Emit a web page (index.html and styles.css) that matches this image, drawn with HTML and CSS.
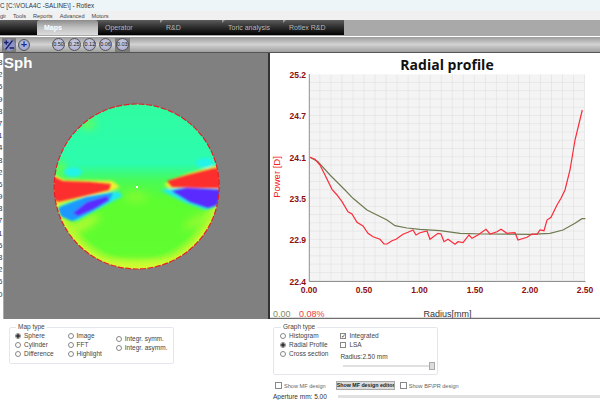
FILE: index.html
```html
<!DOCTYPE html>
<html lang="en">
<head>
<meta charset="utf-8">
<title>Rotlex</title>
<link rel="stylesheet" href="styles.css">
</head>
<body>
<div class="app">
  <div class="titlebar">C [C:\VOLA4C -SALINE\] - Rotlex</div>
  <div class="menubar"><span class="login">gin</span><span>Tools</span><span>Reports</span><span>Advanced</span><span>Motors</span></div>
  <div class="tabbar">
    <div class="tabs">
      <span class="tab tab-active">Maps</span>
      <span class="tab tab-op">Operator</span>
      <span class="tab tab-rd">R&amp;D</span>
      <span class="tab tab-toric">Toric analysis</span>
      <span class="tab tab-rotlex">Rotlex R&amp;D</span>
    </div>
  </div>
  <div class="toolbar">
    <span class="tool-box"><span class="rbtn">
      <svg class="sign-icon" viewBox="0 0 12 12" width="12" height="12" aria-hidden="true"><path d="M1 3.500H5.500M3.250 1.200V5.800M9.500 1.500L2.500 10.500M6.500 9H11" fill="none" stroke="#16206e" stroke-width="1.300"/></svg>
    </span></span>
    <span class="rbtn rbtn-plus">+</span>
    <span class="steps">
      <span class="rbtn rbtn-step">0.50</span>
      <span class="rbtn rbtn-step">0.25</span>
      <span class="rbtn rbtn-step">0.12</span>
      <span class="rbtn rbtn-step">0.06</span>
      <span class="tool-box tool-box-step"><span class="rbtn rbtn-step">0.03</span></span>
    </span>
  </div>
  <div class="main">
    <div class="ruler">
      <span>8</span><span>2</span><span>5</span><span>9</span><span>3</span><span>7</span><span>1</span><span>4</span><span>8</span><span>2</span><span>6</span><span>9</span><span>3</span><span>7</span><span>1</span><span>5</span><span>8</span><span>2</span><span>6</span><span>0</span>
    </div>
    <div class="map">
      <div class="sph">Sph</div>
      <svg class="map-svg" viewBox="4 53 265 266" width="265" height="266" aria-hidden="true">
        <defs>
          <clipPath id="disc"><circle cx="136.7" cy="186.5" r="82.5"/></clipPath>
          <linearGradient id="base" x1="0" y1="0" x2="0" y2="1">
            <stop offset="0" stop-color="#30fca0"/>
            <stop offset="0.36" stop-color="#2bfcae"/>
            <stop offset="0.46" stop-color="#48fb58"/>
            <stop offset="0.58" stop-color="#5cfd30"/>
            <stop offset="1" stop-color="#62fd30"/>
          </linearGradient>
          <radialGradient id="rim" gradientUnits="userSpaceOnUse" cx="136.7" cy="186.5" r="82.5">
            <stop offset="0.86" stop-color="#d8fb30" stop-opacity="0"/>
            <stop offset="1" stop-color="#e8f830" stop-opacity="0.9"/>
          </radialGradient>
          <filter id="b1" filterUnits="userSpaceOnUse" x="4" y="53" width="265" height="266"><feGaussianBlur stdDeviation="1.3"/></filter>
          <filter id="b2" filterUnits="userSpaceOnUse" x="4" y="53" width="265" height="266"><feGaussianBlur stdDeviation="1.8"/></filter>
          <filter id="b4" filterUnits="userSpaceOnUse" x="4" y="53" width="265" height="266"><feGaussianBlur stdDeviation="4"/></filter>
        </defs>
        <g clip-path="url(#disc)">
          <rect x="54" y="104" width="166" height="166" fill="url(#base)"/>
          <rect x="54" y="196" width="166" height="74" fill="url(#rim)"/>
          <g filter="url(#b4)">
            <ellipse cx="80" cy="226" rx="22" ry="5" fill="#b8fb30" transform="rotate(-28 80 226)"/>
            <ellipse cx="200" cy="220" rx="18" ry="4" fill="#a0fb30" transform="rotate(-25 200 220)"/>
            <ellipse cx="138" cy="265" rx="36" ry="4" fill="#d8fb30"/>
            <ellipse cx="88" cy="124" rx="7" ry="5" fill="#70fc48"/>
            <ellipse cx="60" cy="168" rx="5" ry="8" fill="#6cfc40"/>
            <ellipse cx="136" cy="197" rx="12" ry="6" fill="#80fc30"/>
          </g>
          <g filter="url(#b2)">
            <ellipse cx="73" cy="172" rx="9" ry="5" fill="#22f4e8"/>
            <ellipse cx="205" cy="163" rx="9" ry="5" fill="#22f4e8"/>
            <path d="M50 172 L64 180 L112 181 L120 187 L108 192 L80 198 L58 204 L50 204Z" fill="#f8f030"/>
            <path d="M164 184 L187 174 L215 166 L224 166 L224 189 L197 189 L170 189Z" fill="#f4f030"/>
            <path d="M60 206 L88 197 L118 191 L123 196 L100 208 L76 221 L62 216Z" fill="#22e8f0"/>
            <path d="M160 190 L187 186 L224 189 L217 206 L206 210 L186 203Z" fill="#22e8f0"/>
          </g>
          <g filter="url(#b1)">
            <path d="M58 208 L86 197 L113 193 L109 201 L92 211 L72 221 L61 216Z" fill="#1c98ff"/>
            <path d="M73 213 L87 202 L107 196 L109 200 L94 209 L78 216Z" fill="#5a2cff"/>
            <path d="M50 175 L63 181 L90 182 L111 184 L109 190 L80 197 L58 202 L50 197Z" fill="#fc2f2f"/>
            <path d="M167 181 L187 175 L215 168 L224 170 L224 188 L197 188 L172 187Z" fill="#fc2f2f"/>
            <path d="M172 191 L187 188 L224 190 L217 205 L208 208 L190 202Z" fill="#5a2cff"/>
          </g>
        </g>
        <circle class="disc-edge" cx="136.7" cy="186.5" r="82.5"/>
        <rect x="136" y="186" width="2" height="2" fill="#fff"/>
      </svg>
    </div>
    <div class="chart">
      <svg class="chart-svg" viewBox="270 53 330 266" width="330" height="266">
        <defs>
          <pattern id="gridv" x="309.3" y="74.6" width="11.03" height="206.4" patternUnits="userSpaceOnUse">
            <path d="M11.03 0V206.4" stroke="#dcdcdc" stroke-width="1"/>
          </pattern>
          <pattern id="gridh" x="309.3" y="74.6" width="275.7" height="8.26" patternUnits="userSpaceOnUse">
            <path d="M0 8.26H275.7" stroke="#dcdcdc" stroke-width="1"/>
          </pattern>
        </defs>
        <text class="chart-title" x="447" y="70" text-anchor="middle">Radial profile</text>
        <rect x="309.3" y="74.6" width="275.7" height="206.4" fill="#f4f4f4"/>
        <rect x="309.3" y="74.6" width="275.7" height="206.4" fill="url(#gridv)"/>
        <rect x="309.3" y="74.6" width="275.7" height="206.4" fill="url(#gridh)"/>
        <path d="M309.3 74V281.5H585.5" fill="none" stroke="#909090" stroke-width="1"/>
        <g class="ylabels" text-anchor="end">
          <text x="306" y="78">25.2</text>
          <text x="306" y="119">24.7</text>
          <text x="306" y="161">24.1</text>
          <text x="306" y="202">23.5</text>
          <text x="306" y="243">22.9</text>
          <text x="306" y="285">22.4</text>
        </g>
        <g class="ylabels" text-anchor="middle">
          <text x="309" y="293">0.00</text>
          <text x="364" y="293">0.50</text>
          <text x="419.500" y="293">1.00</text>
          <text x="475" y="293">1.50</text>
          <text x="530" y="293">2.00</text>
          <text x="585" y="293">2.50</text>
        </g>
        <text class="axis-y" transform="translate(280 177) rotate(-90)" text-anchor="middle">Power [D]</text>
        <text class="axis-x" x="447.500" y="317" text-anchor="middle">Radius[mm]</text>
        <text class="legend-a" x="273" y="317">0.00</text>
        <text class="legend-b" x="299" y="317">0.08%</text>
        <polyline class="line-olive" points="310,157.300 318,161.700 330,175 345,190 353,198.300 367,210 387,220 395,225.700 407,228 420,229.300 440,230.700 460,233.300 483,234 530,234.300 550,233.300 563,230 575,223.300 582,218.700 585.300,218.700"/>
        <polyline class="line-red" points="310,157.300 315,159.300 320,165 325,175 332,189.300 337,195 342,201.700 348,211.700 352,214 357,222.300 363,226 368,233.300 373,236.700 380,239.300 384,244 387,244 392,240.700 396,239.300 403,234.300 408,232.300 413,230 416,235 420,232.700 427,231 430,239.300 438,233.300 441,234 444,241.700 448,239.300 455,244.300 458,241.700 463,242.700 469,235 472,238.300 478,235 486,229.300 490,234 497,231.700 501,229.300 507,233.300 515,232.700 518,240 527,237.300 532,234 537,234.300 540,230 544,230.700 547,220 551,217.300 557,205 561,198.300 565,190 570,170 575,140 582.300,110"/>
        <path d="M270 318.500H600" stroke="#707070" stroke-width="1.500"/>
      </svg>
    </div>
  </div>
  <div class="lower">
    <fieldset class="group group-map">
      <legend>Map type</legend>
      <div class="col">
        <label class="opt"><i class="radio radio-on"></i>Sphere</label>
        <label class="opt"><i class="radio"></i>Cylinder</label>
        <label class="opt"><i class="radio"></i>Difference</label>
      </div>
      <div class="col">
        <label class="opt"><i class="radio"></i>Image</label>
        <label class="opt"><i class="radio"></i>FFT</label>
        <label class="opt"><i class="radio"></i>Highlight</label>
      </div>
      <div class="col col-integr">
        <label class="opt"><i class="radio"></i>Integr. symm.</label>
        <label class="opt"><i class="radio"></i>Integr. asymm.</label>
      </div>
    </fieldset>
    <div class="right-lower">
      <fieldset class="group group-graph">
        <legend>Graph type</legend>
        <div class="col">
          <label class="opt"><i class="radio"></i>Histogram</label>
          <label class="opt"><i class="radio radio-on"></i>Radial Profile</label>
          <label class="opt"><i class="radio"></i>Cross section</label>
        </div>
        <div class="col col-checks">
          <label class="opt"><i class="check check-on">✓</i>Integrated</label>
          <label class="opt"><i class="check"></i>LSA</label>
          <div class="radius">Radius:2.50 mm</div>
          <div class="slider"><i class="thumb"></i></div>
        </div>
      </fieldset>
      <div class="design-row">
        <label class="opt opt-muted"><i class="check"></i>Show MF design</label>
        <span class="btn">Show MF design editor</span>
        <label class="opt opt-muted"><i class="check"></i>Show BF\PR design</label>
      </div>
      <div class="aperture"><span>Aperture mm: 5.00</span><i class="ap-track"></i></div>
    </div>
  </div>
</div>
</body>
</html>
```
FILE: styles.css
```css
* { box-sizing: border-box; }
html, body { margin: 0; padding: 0; background: #fff; }
body { font-family: "Liberation Sans", Arial, sans-serif; color: #222; }
.app { width: 600px; height: 400px; overflow: hidden; display: flex; flex-direction: column; }

.titlebar { height: 11px; flex: none; background: #eef5f9; font-size: 6.300px; line-height: 11px; color: #333; white-space: nowrap; }
.menubar { height: 9px; flex: none; background: #f0f0f0; font-size: 5.600px; line-height: 10px; color: #444; display: flex; gap: 7px; white-space: nowrap; overflow: hidden; }
.login { width: 6px; overflow: hidden; }

.tabbar { height: 16px; flex: none; background: #a9a9a9; }
.tabs { width: 344px; height: 15px; background: linear-gradient(#5c5c5c, #3a3a3a 35%, #000); display: flex; align-items: center; font-size: 7px; color: #b8b8b8; padding-left: 37px; }
.tab { display: block; white-space: nowrap; line-height: 15px; height: 15px; position: relative; }
.tab-active { width: 61px; padding-left: 7px; color: #fff; font-weight: bold; background: linear-gradient(#8c8c8c, #c0c0c0 50%, #dcdcdc); border-radius: 3px 3px 0 0; }
.tab-op { margin-left: 7px; width: 61px; }
.tab-rd { width: 62px; }
.tab-toric { width: 61px; }
.tab-rd::before, .tab-toric::before, .tab-rotlex::before { content: ""; position: absolute; left: -6px; top: 0; border-top: 3px solid #9a9a9a; border-right: 3px solid transparent; }

.toolbar { height: 17px; flex: none; display: flex; align-items: center; padding-left: 2px; background: linear-gradient(#9c9c9c, #d2d2d2 50%, #a0a0a0); border-top: 1px solid #fff; border-bottom: 1px solid #555; }
.tool-box { width: 14px; height: 14px; background: #7c7c7c; display: flex; align-items: center; justify-content: center; }
.rbtn { display: flex; align-items: center; justify-content: center; border-radius: 50%; width: 12px; height: 12px; background: radial-gradient(circle at 50% 40%, #c6cbe6, #8d93c4); border: 1px solid #555; color: #1e2b8c; font-weight: bold; font-size: 11px; line-height: 1; }
.sign-icon { display: block; flex: none; }
.tool-box .rbtn:has(.sign-icon) { background: #8d93c4; border: 0; }
.rbtn-plus { margin-left: 2px; }
.steps { display: flex; align-items: center; gap: 2.700px; margin-left: 22px; }
.rbtn-step { font-size: 5.500px; font-weight: normal; color: #222; width: 13px; height: 13px; background: radial-gradient(circle at 50% 40%, #cfd2e4, #a0a4c8); }
.tool-box-step { width: 15px; }

.main { height: 266px; flex: none; display: flex; }
.ruler { width: 4px; background: #fff; border-right: 1px solid #aaa; display: flex; flex-direction: column; gap: 3.200px; padding-top: 5px; overflow: hidden; font-size: 8px; line-height: 9px; color: #335; }
.ruler span { display: block; flex: none; margin-left: -2px; }
.map { width: 266px; background: #808080; position: relative; border-right: 2px solid #333; }
.map-svg { display: block; }
.sph { position: absolute; left: 0; top: 1px; font-size: 15px; font-weight: bold; color: #fff; line-height: 17px; }
.disc-edge { fill: none; stroke: #e4202c; stroke-width: 1.200; stroke-dasharray: 6 1.500; }

.chart { width: 330px; background: #fff; }
.chart-svg { display: block; }
.chart-title { font-family: "Open Sans", sans-serif; font-size: 14px; font-weight: 700; fill: #111; }
.ylabels text { font-size: 8.500px; font-weight: bold; fill: #8c0f0f; }
.axis-y { font-size: 9.500px; fill: #f02020; }
.axis-x { font-size: 9px; fill: #333; }
.legend-a { font-size: 9px; fill: #7f8f60; }
.legend-b { font-size: 9px; fill: #f04040; }
.line-red { fill: none; stroke: #fb2b3a; stroke-width: 1.200; }
.line-olive { fill: none; stroke: #6f7a50; stroke-width: 1.200; }

.lower { flex: 1; display: flex; font-size: 6.500px; min-height: 0; }
.group { margin: 0; padding: 0 0 0 5px; border: 1px solid #e3e6ee; border-radius: 2px; display: flex; color: #444; }
.group legend { padding: 0 2px; margin-left: 1px; font-size: 6.500px; line-height: 8px; }
.group-map { width: 165px; height: 41px; margin: 4px 0 0 9px; gap: 14px; }
.group-graph { width: 165px; height: 52px; margin: 4px 0 0 0; gap: 12px; padding-left: 6px; }
.col { display: flex; flex-direction: column; }
.col-integr { padding-top: 3px; }
.opt { display: flex; align-items: center; gap: 3px; height: 9px; white-space: nowrap; }
.radio { width: 6px; height: 6px; border: 1px solid #888; border-radius: 50%; background: #fff; flex: none; display: block; }
.radio-on { background: radial-gradient(circle, #333 0 1.500px, #fff 2px); }
.check { width: 6px; height: 6px; border: 1px solid #888; background: #fff; flex: none; display: block; font-style: normal; font-size: 6px; line-height: 5px; color: #222; }
.radius { margin-top: 3px; line-height: 9px; }
.slider { width: 92px; height: 8px; margin: 1px 0 0 3px; position: relative; background: linear-gradient(#e0e0e0, #e0e0e0) center / 100% 2px no-repeat; }
.thumb { position: absolute; right: 0; top: 0; width: 6px; height: 8px; background: #ddd; border: 1px solid #aaa; display: block; }
.right-lower { margin-left: 99px; display: flex; flex-direction: column; width: 327px; }
.design-row { display: flex; align-items: center; margin: 6px 0 0 2px; height: 9px; }
.opt-muted { color: #666; gap: 2px; font-size: 5.600px; }
.btn { margin-left: 10px; margin-right: 5px; height: 9px; width: 59px; flex: none; background: #dcdcdc; border: 1px solid #aaa; font-size: 5.300px; font-weight: bold; line-height: 7px; text-align: center; white-space: nowrap; overflow: hidden; color: #222; }
.design-row .check { width: 7px; height: 7px; }
.aperture { display: flex; align-items: center; margin-top: 3px; gap: 11px; height: 6px; white-space: nowrap; color: #333; }
.ap-track { display: block; flex: 1; height: 3px; background: #e0e0e0; }
```
